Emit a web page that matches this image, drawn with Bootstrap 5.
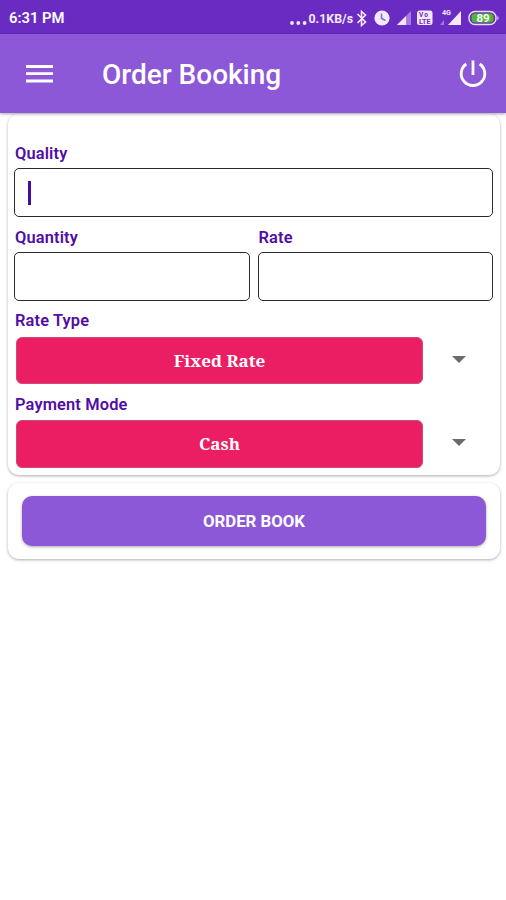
<!DOCTYPE html>
<html lang="en">
<head>
<meta charset="utf-8">
<meta name="viewport" content="width=device-width, initial-scale=1">
<title>Order Booking</title>
<link rel="stylesheet" href="https://cdn.jsdelivr.net/npm/bootstrap@5.3.0/dist/css/bootstrap.min.css">
<style>
body{font-family:Roboto,"Liberation Sans",sans-serif;background:#fff;min-height:900px;overflow:hidden}
.status{height:34px;background:#6a2bc2;font-size:14.8px;font-weight:600;padding:2px 7px 0 9px}
.status svg{display:block}
.appbar{height:79px;background:#8c58d8;padding:0 19px 0 26px;box-shadow:0 1px 3px rgba(0,0,0,.35);z-index:2}
.appbar h1{font-size:28px;font-weight:500;margin:3px 0 0 49px;line-height:1;white-space:nowrap}
.panel{border:0;border-radius:11px;margin:0 6px 0 8px;box-shadow:0 1px 3px rgba(0,0,0,.32)}
.form-panel{height:361.5px;margin-top:.5px;padding:24.5px 7px 0 6px}
.action-panel{height:76px;margin-top:8px;padding:13px 14px 0}
.caption{display:block;height:30px;line-height:31px;font-size:16.4px;letter-spacing:.15px;font-weight:600;color:#510da6;padding-left:1px}
.group{height:83.5px}
.box{height:49px;border:1.5px solid #2b2b2b;border-radius:5px;box-shadow:none!important;padding:0 13px}
.caret{width:3px;height:24px;background:#430fa0}
.picker{padding-top:1.5px}
.pick{width:407px;height:47.5px;margin-left:2px;border:1px solid #d04a78;border-radius:6px;background:#eb1d63!important;font:bold 17px "Noto Serif","DejaVu Serif Condensed","DejaVu Serif",serif;color:#fff!important}
.arrow{width:14px;height:7px;margin:-2px 0 0 29px}
.book{height:49.5px;border:0;border-radius:10px;background:#8c58d8!important;color:#fff!important;font-size:16.8px;font-weight:700;padding:2px 0 0;box-shadow:0 1px 3px rgba(0,0,0,.35)}
</style>
<script src="https://cdn.jsdelivr.net/npm/bootstrap@5.3.0/dist/js/bootstrap.bundle.min.js"></script>
</head>
<body>
<header class="status d-flex align-items-center justify-content-between text-white">
  <span>6:31 PM</span>
  <svg width="211" height="30" viewBox="288 3 211 30" fill="#f3e8ff" font-family="Roboto, sans-serif" font-weight="700">
    <circle cx="292" cy="23" r="1.9"/><circle cx="298.3" cy="23" r="1.9"/><circle cx="304.6" cy="23" r="1.9"/>
    <text x="308.5" y="22.5" font-size="12" textLength="44.5" lengthAdjust="spacingAndGlyphs">0.1KB/s</text>
    <path d="M357.5 14l8 8-4 3.500v-14l4 3.500-8 8" fill="none" stroke="#f3e8ff" stroke-width="1.6"/>
    <circle cx="382" cy="18" r="7.600"/><path d="M381.500 13.500v5l4 2" fill="none" stroke="#8c6bd0" stroke-width="1.600"/>
    <path d="M411 11v14h-14z" fill="#a57be0"/><path d="M406 16v9h-9z"/>
    <rect x="417" y="10.500" width="15.500" height="14.500" rx="2.500"/>
    <g fill="#6a2bc2"><text x="419" y="17.300" font-size="6.500" textLength="9">Vo</text><text x="419" y="23.600" font-size="6.500" textLength="11.500" lengthAdjust="spacingAndGlyphs">LTE</text></g>
    <text x="442" y="14.500" font-size="7.500" textLength="9" lengthAdjust="spacingAndGlyphs">4G</text>
    <path d="M461 11v14h-13z"/><path d="M444 20v5h-4z" fill="#a57be0"/>
    <rect x="469" y="11.500" width="27" height="13" rx="6" fill="#6a2bc2" stroke="#eadcf8" stroke-width="1.500"/>
    <rect x="471.500" y="13.500" width="22" height="9" rx="3.500" fill="#4eb82e"/><path d="M497.500 15.500q2 2.500 0 5z"/>
    <text x="483" y="22" font-size="11.500" text-anchor="middle" fill="#fff">89</text>
  </svg>
</header>
<nav class="appbar d-flex align-items-center position-relative text-white">
  <svg width="27" height="20" viewBox="0 0 27 20" stroke="#fff" stroke-width="2.800"><path d="M0 2.500h27M0 9.700h27M0 17h27"/></svg>
  <h1>Order Booking</h1>
  <svg class="ms-auto" width="28" height="30" viewBox="0 0 28 30" fill="none" stroke="#fff" stroke-width="2.800"><path d="M14 1.500v14.500M7.300 5a11.800 11.800 0 1 0 13.400 0"/></svg>
</nav>
<main>
  <form class="card panel form-panel">
    <div class="group"><label class="caption" for="quality">Quality</label>
      <div id="quality" class="form-control box d-flex align-items-center"><span class="caret"></span></div></div>
    <div class="group d-flex gap-2">
      <div class="flex-fill w-50"><label class="caption" for="quantity">Quantity</label><input id="quantity" class="form-control box"></div>
      <div class="flex-fill w-50"><label class="caption" for="rate">Rate</label><input id="rate" class="form-control box"></div>
    </div>
    <div class="group"><span class="caption">Rate Type</span>
      <div class="picker d-flex align-items-center"><button type="button" class="btn pick">Fixed Rate</button><svg class="arrow" viewBox="0 0 14 7"><path d="M0 0h14L7 7z" fill="#6b6b6b"/></svg></div></div>
    <div class="group"><span class="caption">Payment Mode</span>
      <div class="picker d-flex align-items-center"><button type="button" class="btn pick">Cash</button><svg class="arrow" viewBox="0 0 14 7"><path d="M0 0h14L7 7z" fill="#6b6b6b"/></svg></div></div>
  </form>
  <section class="card panel action-panel"><button type="button" class="btn book w-100">ORDER BOOK</button></section>
</main>
</body>
</html>
